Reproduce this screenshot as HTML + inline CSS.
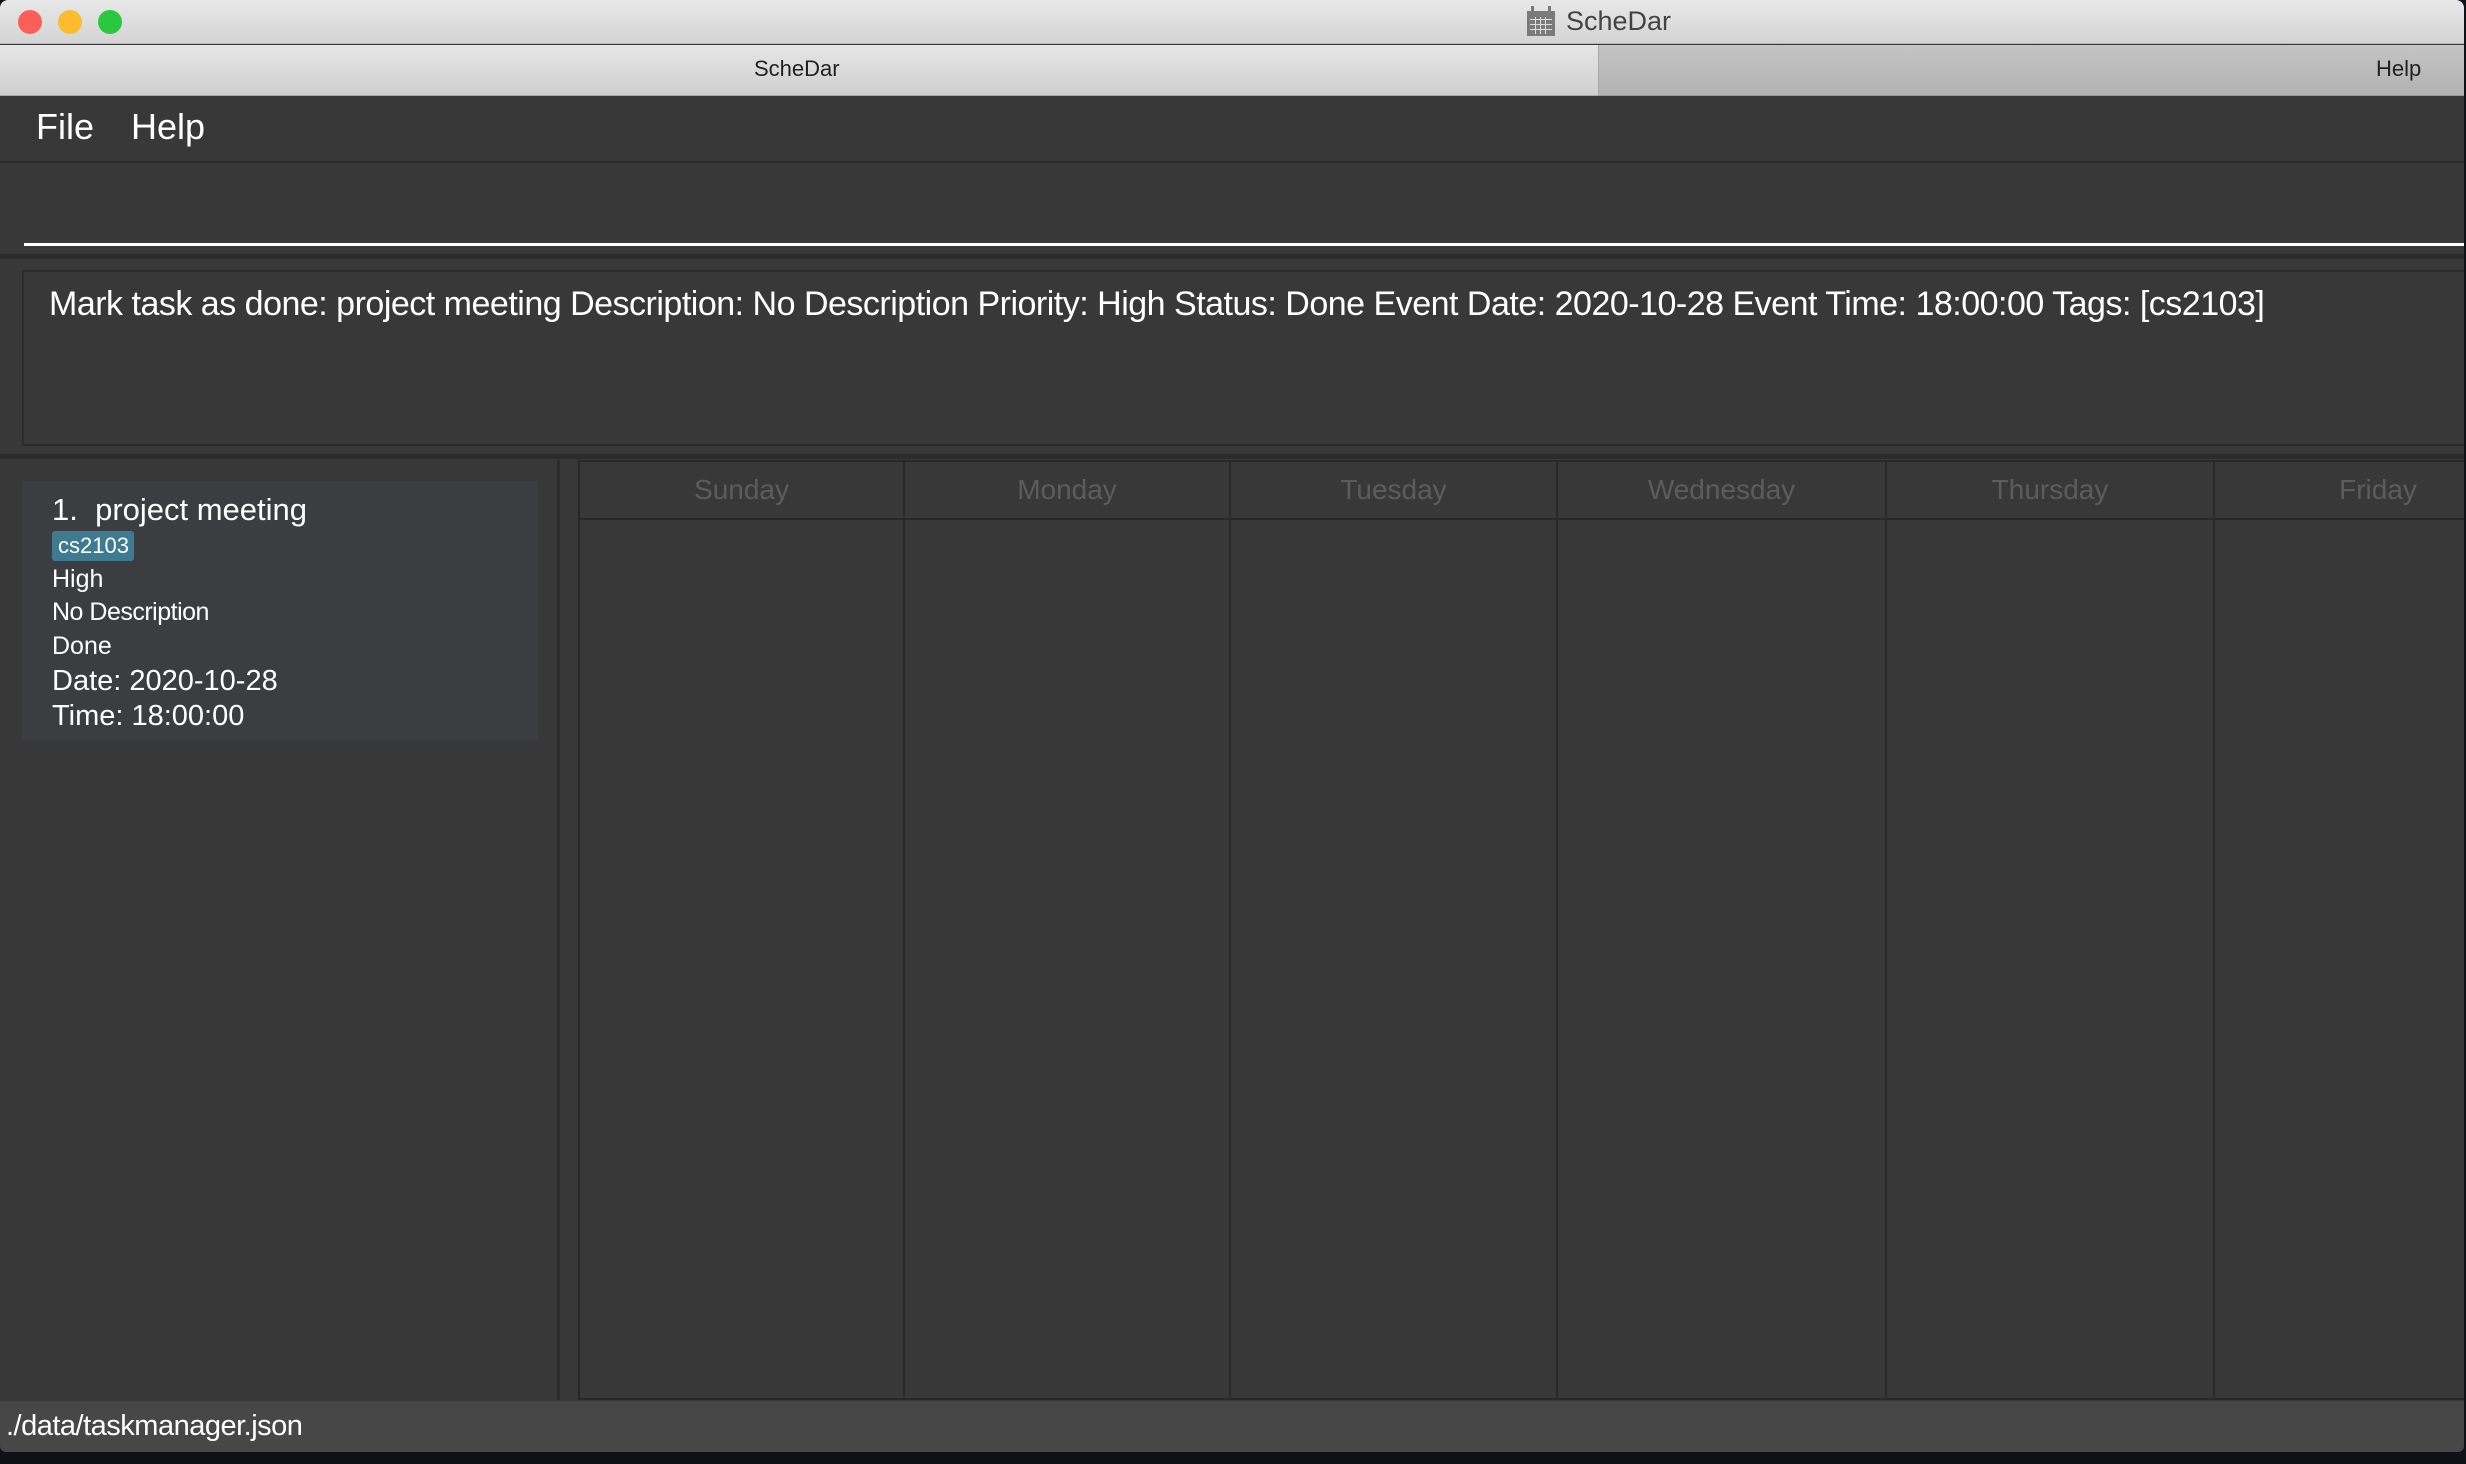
<!DOCTYPE html>
<html><head><style>
*{margin:0;padding:0;box-sizing:border-box}
body{width:2466px;height:1464px;background:#0f1118;font-family:"Liberation Sans",sans-serif;position:relative;overflow:hidden}
.a{position:absolute}
.t{white-space:nowrap}
</style></head><body>
<div class="a" style="left:0;top:0;width:2464px;height:1452px;background:#383838;border-radius:8px 8px 6px 6px;overflow:hidden">
 <div class="a" style="left:0;top:0;width:100%;height:44px;background:linear-gradient(#e8e8e8,#d4d4d4);border-bottom:1px solid #b8b8b8"></div>
 <div class="a" style="left:18px;top:10px;width:24px;height:24px;border-radius:50%;background:#fc5f57"></div>
 <div class="a" style="left:58px;top:10px;width:24px;height:24px;border-radius:50%;background:#fdbc2e"></div>
 <div class="a" style="left:98px;top:10px;width:24px;height:24px;border-radius:50%;background:#29c840"></div>
 <svg class="a" style="left:1526px;top:6px" width="30" height="31" viewBox="0 0 30 31"><rect x="1" y="5" width="28" height="25" fill="#7a7a7a"/><rect x="5" y="0" width="3" height="7" fill="#7a7a7a"/><rect x="22" y="0" width="3" height="7" fill="#7a7a7a"/><g fill="#ddd"><rect x="4" y="13" width="22" height="1"/><rect x="4" y="18" width="22" height="1"/><rect x="4" y="23" width="22" height="1"/><rect x="9" y="11" width="1" height="17"/><rect x="14" y="11" width="1" height="17"/><rect x="19" y="11" width="1" height="17"/></g></svg>
 <div class="a t" style="left:1566px;top:6px;font-size:27px;color:#444">ScheDar</div>
 <div class="a" style="left:0;top:45px;width:1598px;height:51px;background:linear-gradient(#e6e6e6,#cfcfcf);border-bottom:1px solid #aaa"></div>
 <div class="a" style="left:1598px;top:45px;width:868px;height:51px;background:linear-gradient(#c4c4c4,#b2b2b2);border-left:1px solid #a8a8a8;border-bottom:1px solid #999"></div>
 <div class="a t" style="left:754px;top:56px;font-size:22px;color:#222">ScheDar</div>
 <div class="a t" style="left:2376px;top:56px;font-size:22px;color:#222">Help</div>
 <div class="a" style="left:0;top:96px;width:100%;height:67px;background:#383838;border-bottom:2px solid #2a2a2a"></div>
 <div class="a t" style="left:36px;top:106px;font-size:36px;color:#fff">File</div>
 <div class="a t" style="left:131px;top:106px;font-size:36px;color:#fff">Help</div>
 <div class="a" style="left:24px;top:243px;width:2442px;height:3px;background:#fff"></div>
 <div class="a" style="left:0;top:254px;width:100%;height:5px;background:#2b2b2b"></div>
 <div class="a" style="left:22px;top:270px;width:2444px;height:176px;border:2px solid #2b2b2b;border-right:none"></div>
 <div class="a t" style="left:49px;top:285px;font-size:34px;color:#fff;letter-spacing:-0.5px">Mark task as done: project meeting Description: No Description Priority: High Status: Done Event Date: 2020-10-28 Event Time: 18:00:00 Tags: [cs2103]</div>
 <div class="a" style="left:0;top:454px;width:100%;height:5px;background:#2b2b2b"></div>
 <div class="a" style="left:557px;top:460px;width:3px;height:940px;background:#2c2c2c"></div>
 <div class="a" style="left:22px;top:481px;width:516px;height:260px;background:#3c3d40"></div>
 <div class="a t" style="left:52px;top:492px;font-size:31px;color:#fff">1.&nbsp; project meeting</div>
 <div class="a t" style="left:52px;top:531px;width:82px;height:30px;background:#3e7b91;border-radius:3px;color:#fff;font-size:22px;line-height:30px;padding-left:6px">cs2103</div>
 <div class="a t" style="left:52px;top:565px;font-size:25px;color:#fff">High</div>
 <div class="a t" style="left:52px;top:598px;font-size:25px;color:#fff;letter-spacing:-0.5px">No Description</div>
 <div class="a t" style="left:52px;top:632px;font-size:25px;color:#fff">Done</div>
 <div class="a t" style="left:52px;top:665px;font-size:29px;color:#fff">Date: 2020-10-28</div>
 <div class="a t" style="left:52px;top:700px;font-size:29px;color:#fff">Time: 18:00:00</div>
 <div class="a" style="left:578px;top:460px;width:1888px;height:940px;border:2px solid #282828;border-right:none"></div>
 <div class="a" style="left:578px;top:518px;width:1888px;height:2px;background:#282828"></div>
 <div class="a" style="left:903px;top:460px;width:2px;height:940px;background:#282828"></div>
 <div class="a" style="left:1229px;top:460px;width:2px;height:940px;background:#282828"></div>
 <div class="a" style="left:1556px;top:460px;width:2px;height:940px;background:#282828"></div>
 <div class="a" style="left:1885px;top:460px;width:2px;height:940px;background:#282828"></div>
 <div class="a" style="left:2213px;top:460px;width:2px;height:940px;background:#282828"></div>
 <div class="a t" style="left:580px;top:474px;width:323px;text-align:center;font-size:28px;color:#5c5c5c">Sunday</div>
 <div class="a t" style="left:905px;top:474px;width:324px;text-align:center;font-size:28px;color:#5c5c5c">Monday</div>
 <div class="a t" style="left:1231px;top:474px;width:325px;text-align:center;font-size:28px;color:#5c5c5c">Tuesday</div>
 <div class="a t" style="left:1558px;top:474px;width:327px;text-align:center;font-size:28px;color:#5c5c5c">Wednesday</div>
 <div class="a t" style="left:1887px;top:474px;width:326px;text-align:center;font-size:28px;color:#5c5c5c">Thursday</div>
 <div class="a t" style="left:2215px;top:474px;width:326px;text-align:center;font-size:28px;color:#5c5c5c">Friday</div>
 <div class="a" style="left:0;top:1401px;width:100%;height:51px;background:#474747"></div>
 <div class="a t" style="left:6px;top:1410px;font-size:29px;color:#fff;letter-spacing:-0.5px">./data/taskmanager.json</div>
</div>
</body></html>
